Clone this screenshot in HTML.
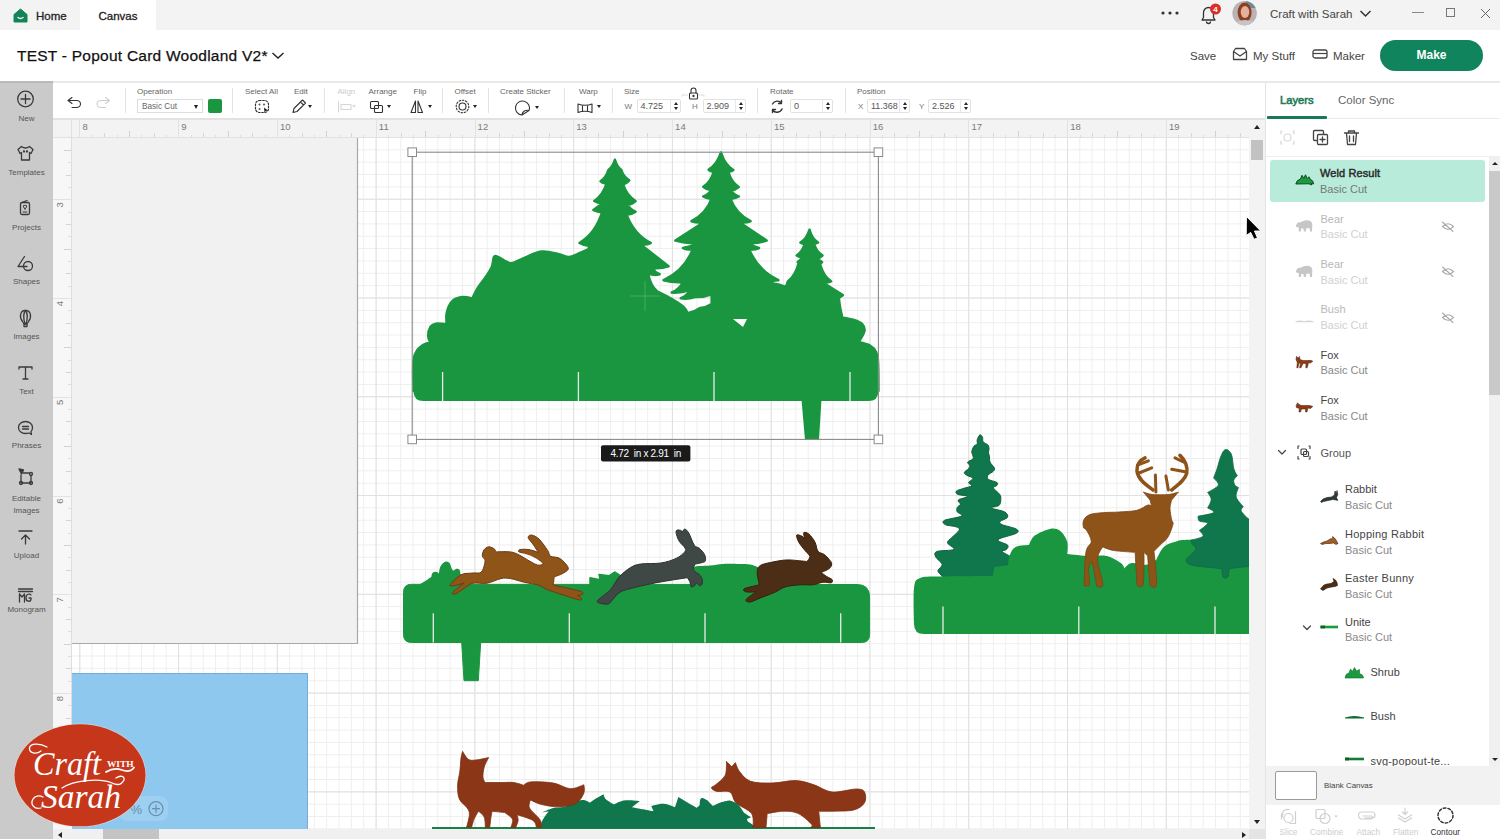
<!DOCTYPE html>
<html><head><meta charset="utf-8">
<style>
*{margin:0;padding:0;box-sizing:border-box}
html,body{width:1500px;height:839px;overflow:hidden;background:#fff;font-family:"Liberation Sans",sans-serif;color:#222}
.a{position:absolute}
.t{position:absolute;white-space:nowrap;line-height:1}
#top{left:0;top:0;width:1500px;height:30px;background:#f3f3f3}
#hdr{left:0;top:30px;width:1500px;height:51px;background:#fff}
#side{left:0;top:81px;width:53px;height:758px;background:#cacaca}
#tool{left:53px;top:81px;width:1212px;height:39px;background:#fff;border-top:2px solid #e9e9e9;border-bottom:2px solid #e2e2e2}
#rulT{left:53px;top:120px;width:1197px;height:18px;background:#f3f3f3}
#rulL{left:53px;top:137px;width:19px;height:692px;background:#f7f7f7}
#cv{left:72px;top:138px;width:1177px;height:691px;background:#fff;overflow:hidden}
#vs{left:1249px;top:120px;width:16px;height:719px;background:#f3f3f3}
#hs{left:53px;top:829px;width:1196px;height:10px;background:#f0f0f0}
#rp{left:1265px;top:81px;width:235px;height:758px;background:#fff;border-left:1px solid #e4e4e4}
.sl{position:absolute;left:0;width:53px;text-align:center;font-size:8px;color:#555;line-height:1}
.tl{position:absolute;font-size:8px;color:#666;line-height:1;white-space:nowrap}
.dv{position:absolute;top:88px;width:1px;height:25px;background:#e3e3e3}
.inp{position:absolute;top:99px;height:14px;border:1px solid #e2e2e2;border-radius:2px;background:#fff;font-size:9px;color:#555;line-height:12px;padding-left:3px}
.sp{position:absolute;top:0;right:0;width:10px;height:12px;border-left:1px solid #e8e8e8}
.sp:before{content:"";position:absolute;left:3px;top:2px;border:2px solid transparent;border-bottom:3px solid #222;border-top:0}
.sp:after{content:"";position:absolute;left:3px;top:7px;border:2px solid transparent;border-top:3px solid #222;border-bottom:0}
.ar{position:absolute;width:0;height:0;border-left:2px solid transparent;border-right:2px solid transparent;border-top:3px solid #222}
.lay{position:absolute;font-size:11px;color:#333;white-space:nowrap;line-height:1}
.lay2{position:absolute;font-size:11px;color:#888;white-space:nowrap;line-height:1}
</style></head>
<body>

<div id="top" class="a"></div>
<div class="a" style="left:80px;top:0;width:76px;height:30px;background:#fff"></div>
<svg class="a" style="left:13px;top:8px" width="15" height="15" viewBox="0 0 15 15"><path d="M1 6.5L7.5 1L14 6.5V14H1Z" fill="#13845a" stroke="#13845a" stroke-linejoin="round"/><path d="M5 9.5Q7.5 11.5 10 9.5" stroke="#fff" stroke-width="1.3" fill="none" stroke-linecap="round"/></svg>
<div class="a" style="left:36px;top:9.5px;font-size:11.5px;color:#222;-webkit-text-stroke:0.3px #222">Home</div>
<div class="a" style="left:98.5px;top:9.5px;font-size:11.5px;color:#222;-webkit-text-stroke:0.3px #222">Canvas</div>
<svg class="a" style="left:1160px;top:10px" width="20" height="6"><circle cx="3" cy="3" r="1.6" fill="#333"/><circle cx="10" cy="3" r="1.6" fill="#333"/><circle cx="17" cy="3" r="1.6" fill="#333"/></svg>
<svg class="a" style="left:1198px;top:3px" width="26" height="22" viewBox="0 0 26 22"><path d="M4 17H17L15.5 14.5V9.5A5 5 0 0 0 5.5 9.5V14.5Z" fill="none" stroke="#333" stroke-width="1.3" stroke-linejoin="round"/><path d="M8.5 18.5A2 2 0 0 0 12.5 18.5" fill="none" stroke="#333" stroke-width="1.3"/><circle cx="17.5" cy="6" r="5.5" fill="#d93025"/><text x="17.5" y="9" font-size="8" font-weight="bold" fill="#fff" text-anchor="middle" font-family="Liberation Sans">4</text></svg>
<svg class="a" style="left:1232px;top:0" width="26" height="27"><defs><clipPath id="avc"><circle cx="12.6" cy="13.2" r="12.2"/></clipPath></defs><g clip-path="url(#avc)"><rect width="26" height="27" fill="#b9b3b3"/><rect x="14" y="0" width="12" height="8" fill="#6d8d96"/><ellipse cx="12.6" cy="12.5" rx="7" ry="10" fill="#8e3e22"/><ellipse cx="13" cy="12" rx="4.3" ry="6" fill="#e3b09a"/><ellipse cx="12.8" cy="26" rx="11" ry="6" fill="#c8c4c6"/></g></svg>
<div class="a" style="left:1270px;top:8px;font-size:11.5px;color:#444">Craft with Sarah</div>
<svg class="a" style="left:1359px;top:9px" width="13" height="9"><path d="M1.5 2L6.5 7L11.5 2" fill="none" stroke="#333" stroke-width="1.5"/></svg>
<div class="a" style="left:1412px;top:12px;width:12px;height:1px;background:#888"></div>
<div class="a" style="left:1446px;top:8px;width:9px;height:9px;border:1px solid #777"></div>
<svg class="a" style="left:1480px;top:8px" width="11" height="11"><path d="M1 1L10 10M10 1L1 10" stroke="#666" stroke-width="1"/></svg>
<div id="hdr" class="a"></div>
<div class="t" style="left:17px;top:47.5px;font-size:15.5px;color:#111;letter-spacing:0.24px;-webkit-text-stroke:0.25px #111">TEST - Popout Card Woodland V2*</div>
<svg class="a" style="left:271px;top:51px" width="14" height="9"><path d="M1.5 2L7 7L12.5 2" fill="none" stroke="#222" stroke-width="1.4"/></svg>
<div class="a" style="left:1190px;top:50px;font-size:11.5px;color:#444">Save</div>
<svg class="a" style="left:1232px;top:47px" width="16" height="14" viewBox="0 0 16 14"><path d="M1.5 4.5L3.5 1.5H12.5L14.5 4.5V12.5H1.5Z M1.5 4.5L8 9L14.5 4.5" fill="none" stroke="#444" stroke-width="1.3" stroke-linejoin="round"/></svg>
<div class="a" style="left:1253px;top:50px;font-size:11.5px;color:#444">My Stuff</div>
<svg class="a" style="left:1312px;top:49px" width="16" height="11" viewBox="0 0 16 11"><rect x="1" y="1" width="14" height="8" rx="2" fill="none" stroke="#444" stroke-width="1.3"/><path d="M1 4.5H15" stroke="#444" stroke-width="1.2"/></svg>
<div class="a" style="left:1333px;top:50px;font-size:11.5px;color:#444">Maker</div>
<div class="a" style="left:1380px;top:40px;width:103px;height:31px;border-radius:16px;background:#10845c;color:#fff;font-weight:bold;font-size:12px;text-align:center;line-height:31px">Make</div>
<div id="side" class="a"></div><div class="a" style="left:0;top:81px;width:53px;height:2px;background:#bababa"></div>
<svg class="a" style="left:0;top:81px" width="53" height="560" viewBox="0 81 53 560" fill="none" stroke="#3a3a3a" stroke-width="1.3" stroke-linecap="round" stroke-linejoin="round">
<circle cx="25.5" cy="99" r="7.8"/><path d="M25.5 94.5V103.5M21 99H30"/>
<path d="M21.5 146.5L18 149.5L20 153.5L21.5 152.5V160H29.5V152.5L31 153.5L33 149.5L29.5 146.5Q25.5 149.5 21.5 146.5Z"/><circle cx="24" cy="151.5" r="0.5" fill="#3a3a3a"/><circle cx="27" cy="151.5" r="0.5" fill="#3a3a3a"/>
<rect x="20.5" y="202.5" width="9" height="12" rx="1.5"/><path d="M22 202.5L27 200.5"/><path d="M25 209Q22.5 206.5 23.5 205.5Q24.5 204.8 25 206Q25.5 204.8 26.5 205.5Q27.5 206.5 25 209Z" stroke-width="1"/><path d="M23 212H27" stroke-width="1"/>
<path d="M24.5 256.5L18 266.5H27"/><circle cx="28" cy="266" r="4.5"/>
<path d="M25.5 310.5C20 310.5 19 317 22.5 321.5L24 324H27L28.5 321.5C32 317 31 310.5 25.5 310.5Z"/><path d="M25.5 310.5C23.5 313 23.5 319 25 324M25.5 310.5C27.5 313 27.5 319 26 324"/><path d="M24 324.5V326.5H27V324.5"/>
<path d="M19 369V367H32V369M25.5 367V379M23 379H28"/>
<path d="M25.5 421.5C21.5 421.5 18.5 424 18.5 427.5C18.5 431 21.5 433.5 25.5 433.5C26.5 433.5 28 433.3 29 433L31.5 434.5L31 431.5C32 430.5 32.5 429 32.5 427.5C32.5 424 29.5 421.5 25.5 421.5Z"/><path d="M22.5 426.5H28.5M22.5 429H28.5"/>
<path d="M21 475V483H31V475M23 473H29" /><circle cx="21" cy="483" r="1.5"/><circle cx="31" cy="483" r="1.5"/><circle cx="31" cy="474" r="1.5"/><path d="M19 469L21.5 474L23.5 470Z" fill="#3a3a3a"/>
<path d="M19 531H32M25.5 544V535M21.5 539L25.5 535L29.5 539"/>
<path d="M18.5 589H32.5M18.5 591.5H32.5M19.5 594V602M19.5 594L22 597L24.5 594V602M31 595C30 593.5 26 593.5 26 598C26 602 30.5 602 31 599.5V598H29"/>
</svg>
<div class="sl" style="top:114.5px">New</div>
<div class="sl" style="top:168.5px">Templates</div>
<div class="sl" style="top:223.5px">Projects</div>
<div class="sl" style="top:278px">Shapes</div>
<div class="sl" style="top:333px">Images</div>
<div class="sl" style="top:387.5px">Text</div>
<div class="sl" style="top:442px">Phrases</div>
<div class="sl" style="top:495px">Editable</div>
<div class="sl" style="top:506.5px">Images</div>
<div class="sl" style="top:551.5px">Upload</div>
<div class="sl" style="top:606px">Monogram</div>
<div id="tool" class="a"></div>
<svg class="a" style="left:0;top:81px" width="1000" height="40" viewBox="0 81 1000 40" fill="none" stroke="#333" stroke-width="1.1" stroke-linecap="round" stroke-linejoin="round">
<path d="M72 97.5L68 100.5L72 103.5M68.5 100.5H76.5A4 3.5 0 0 1 76.5 107.5H72"/>
<path d="M105.5 97.5L109.5 100.5L105.5 103.5M109 100.5H101A4 3.5 0 0 0 101 107.5H105.5" stroke="#cfcfcf"/>
<g stroke="#333" stroke-width="1.2" stroke-dasharray="1.6 1.6"><rect x="255.5" y="100.5" width="13" height="12" rx="4"/></g>
<circle cx="259.5" cy="104.5" r="1" fill="#555" stroke="none"/><circle cx="264" cy="104.5" r="1" fill="#555" stroke="none"/><circle cx="259.5" cy="109" r="1" fill="#555" stroke="none"/>
<path d="M264 107.5L268 110.5L265.5 111L264.5 113Z" fill="#222" stroke="none"/>
<path d="M293 112.5L294 108.5L302.5 100L305.5 103L297 111.5Z M300.5 102L303.5 105"/>
<path d="M338.5 102V112M341 104.5H351V109.5H341Z" stroke="#d5d5d5"/>
<rect x="370.5" y="101.5" width="8" height="7" rx="1"/><rect x="374.5" y="105.5" width="8" height="7" rx="1"/>
<path d="M411 112.5L415.5 101V112.5Z M422.5 112.5L418 101V112.5Z"/>
<circle cx="462.5" cy="106.5" r="3.5"/><circle cx="462.5" cy="106.5" r="6.3" stroke-dasharray="1.5 1.7"/>
<path d="M529 110.5A7 7 0 1 0 522 115M529 110.5C525 109.5 522 112 522 115M529 110.5L522 115"/>
<path d="M578 104Q585 106.5 592 104V112.5Q585 110 578 112.5Z M582.5 105.5V111M587.5 105.5V111"/>
<path d="M682 96.5V95H687.5M699 95H704V96.5" stroke="#ddd" stroke-width="1"/>
<rect x="689.5" y="93" width="8" height="6" rx="1"/><path d="M691 93V90.5A2.5 2.5 0 0 1 696 90.5V93"/><circle cx="693.5" cy="96" r="0.6" fill="#333"/>
<path d="M781.5 103A5.5 5.5 0 0 0 772.5 104M772.5 110A5.5 5.5 0 0 0 782 109M781.5 100.5V103.5H778.5M772.5 112.5V109.5H775.5" stroke-width="1.4"/>
</svg>
<div class="dv" style="left:124.5px"></div><div class="dv" style="left:232px"></div><div class="dv" style="left:323.5px"></div><div class="dv" style="left:442px"></div>
<div class="dv" style="left:488px"></div><div class="dv" style="left:564px"></div><div class="dv" style="left:612px"></div><div class="dv" style="left:757px"></div><div class="dv" style="left:845px"></div>
<div class="tl" style="left:137px;top:87.5px">Operation</div>
<div class="a" style="left:136.5px;top:99px;width:66px;height:14px;border:1px solid #ddd;background:#fff"></div>
<div class="tl" style="left:142px;top:102.5px;font-size:8.2px;color:#666">Basic Cut</div>
<div class="ar" style="left:194px;top:104.5px;border-left-width:2.5px;border-right-width:2.5px;border-top-width:4px"></div>
<div class="a" style="left:207.5px;top:99px;width:14px;height:14px;border-radius:2px;background:#1a9640"></div>
<div class="tl" style="left:245px;top:87.5px">Select All</div>
<div class="tl" style="left:294px;top:87.5px">Edit</div>
<div class="ar" style="left:308px;top:105px"></div>
<div class="tl" style="left:337.5px;top:87.5px;color:#ccc">Align</div>
<div class="ar" style="left:352px;top:105px;border-top-color:#ddd"></div>
<div class="tl" style="left:368.5px;top:87.5px">Arrange</div>
<div class="ar" style="left:387px;top:105px"></div>
<div class="tl" style="left:413.5px;top:87.5px">Flip</div>
<div class="ar" style="left:428px;top:105px"></div>
<div class="tl" style="left:454.5px;top:87.5px">Offset</div>
<div class="ar" style="left:473px;top:105px"></div>
<div class="tl" style="left:500px;top:87.5px">Create Sticker</div>
<div class="ar" style="left:535px;top:106px"></div>
<div class="tl" style="left:579px;top:87.5px">Warp</div>
<div class="ar" style="left:597px;top:105px"></div>
<div class="tl" style="left:624px;top:87.5px">Size</div>
<div class="tl" style="left:624.5px;top:103px;color:#777">W</div>
<div class="inp" style="left:636.5px;width:44px">4.725<div class="sp"></div></div>
<div class="tl" style="left:692px;top:103px;color:#777">H</div>
<div class="inp" style="left:702.5px;width:43px">2.909<div class="sp"></div></div>
<div class="tl" style="left:770px;top:87.5px">Rotate</div>
<div class="inp" style="left:790px;width:43px">0<div class="sp"></div></div>
<div class="tl" style="left:857px;top:87.5px">Position</div>
<div class="tl" style="left:858px;top:103px;color:#777">X</div>
<div class="inp" style="left:867px;width:43px">11.368<div class="sp"></div></div>
<div class="tl" style="left:919px;top:103px;color:#777">Y</div>
<div class="inp" style="left:928px;width:43px">2.526<div class="sp"></div></div>
<div id="rulT" class="a"></div>
<div id="rulL" class="a"></div>

<svg class="a" style="left:53px;top:120px" width="1197" height="18">
<rect x="26" y="0" width="1" height="18" fill="#e2e2e2"/>
<rect x="39" y="15" width="1" height="3" fill="#dedede"/>
<rect x="51" y="13" width="1" height="5" fill="#d6d6d6"/>
<rect x="64" y="15" width="1" height="3" fill="#dedede"/>
<rect x="76" y="11" width="1" height="7" fill="#d0d0d0"/>
<rect x="88" y="15" width="1" height="3" fill="#dedede"/>
<rect x="101" y="13" width="1" height="5" fill="#d6d6d6"/>
<rect x="113" y="15" width="1" height="3" fill="#dedede"/>
<rect x="125" y="0" width="1" height="18" fill="#e2e2e2"/>
<rect x="138" y="15" width="1" height="3" fill="#dedede"/>
<rect x="150" y="13" width="1" height="5" fill="#d6d6d6"/>
<rect x="162" y="15" width="1" height="3" fill="#dedede"/>
<rect x="175" y="11" width="1" height="7" fill="#d0d0d0"/>
<rect x="187" y="15" width="1" height="3" fill="#dedede"/>
<rect x="199" y="13" width="1" height="5" fill="#d6d6d6"/>
<rect x="212" y="15" width="1" height="3" fill="#dedede"/>
<rect x="224" y="0" width="1" height="18" fill="#e2e2e2"/>
<rect x="236" y="15" width="1" height="3" fill="#dedede"/>
<rect x="249" y="13" width="1" height="5" fill="#d6d6d6"/>
<rect x="261" y="15" width="1" height="3" fill="#dedede"/>
<rect x="273" y="11" width="1" height="7" fill="#d0d0d0"/>
<rect x="286" y="15" width="1" height="3" fill="#dedede"/>
<rect x="298" y="13" width="1" height="5" fill="#d6d6d6"/>
<rect x="310" y="15" width="1" height="3" fill="#dedede"/>
<rect x="323" y="0" width="1" height="18" fill="#e2e2e2"/>
<rect x="335" y="15" width="1" height="3" fill="#dedede"/>
<rect x="348" y="13" width="1" height="5" fill="#d6d6d6"/>
<rect x="360" y="15" width="1" height="3" fill="#dedede"/>
<rect x="372" y="11" width="1" height="7" fill="#d0d0d0"/>
<rect x="385" y="15" width="1" height="3" fill="#dedede"/>
<rect x="397" y="13" width="1" height="5" fill="#d6d6d6"/>
<rect x="409" y="15" width="1" height="3" fill="#dedede"/>
<rect x="422" y="0" width="1" height="18" fill="#e2e2e2"/>
<rect x="434" y="15" width="1" height="3" fill="#dedede"/>
<rect x="446" y="13" width="1" height="5" fill="#d6d6d6"/>
<rect x="459" y="15" width="1" height="3" fill="#dedede"/>
<rect x="471" y="11" width="1" height="7" fill="#d0d0d0"/>
<rect x="483" y="15" width="1" height="3" fill="#dedede"/>
<rect x="496" y="13" width="1" height="5" fill="#d6d6d6"/>
<rect x="508" y="15" width="1" height="3" fill="#dedede"/>
<rect x="520" y="0" width="1" height="18" fill="#e2e2e2"/>
<rect x="533" y="15" width="1" height="3" fill="#dedede"/>
<rect x="545" y="13" width="1" height="5" fill="#d6d6d6"/>
<rect x="557" y="15" width="1" height="3" fill="#dedede"/>
<rect x="570" y="11" width="1" height="7" fill="#d0d0d0"/>
<rect x="582" y="15" width="1" height="3" fill="#dedede"/>
<rect x="594" y="13" width="1" height="5" fill="#d6d6d6"/>
<rect x="607" y="15" width="1" height="3" fill="#dedede"/>
<rect x="619" y="0" width="1" height="18" fill="#e2e2e2"/>
<rect x="631" y="15" width="1" height="3" fill="#dedede"/>
<rect x="644" y="13" width="1" height="5" fill="#d6d6d6"/>
<rect x="656" y="15" width="1" height="3" fill="#dedede"/>
<rect x="669" y="11" width="1" height="7" fill="#d0d0d0"/>
<rect x="681" y="15" width="1" height="3" fill="#dedede"/>
<rect x="693" y="13" width="1" height="5" fill="#d6d6d6"/>
<rect x="706" y="15" width="1" height="3" fill="#dedede"/>
<rect x="718" y="0" width="1" height="18" fill="#e2e2e2"/>
<rect x="730" y="15" width="1" height="3" fill="#dedede"/>
<rect x="743" y="13" width="1" height="5" fill="#d6d6d6"/>
<rect x="755" y="15" width="1" height="3" fill="#dedede"/>
<rect x="767" y="11" width="1" height="7" fill="#d0d0d0"/>
<rect x="780" y="15" width="1" height="3" fill="#dedede"/>
<rect x="792" y="13" width="1" height="5" fill="#d6d6d6"/>
<rect x="804" y="15" width="1" height="3" fill="#dedede"/>
<rect x="817" y="0" width="1" height="18" fill="#e2e2e2"/>
<rect x="829" y="15" width="1" height="3" fill="#dedede"/>
<rect x="841" y="13" width="1" height="5" fill="#d6d6d6"/>
<rect x="854" y="15" width="1" height="3" fill="#dedede"/>
<rect x="866" y="11" width="1" height="7" fill="#d0d0d0"/>
<rect x="878" y="15" width="1" height="3" fill="#dedede"/>
<rect x="891" y="13" width="1" height="5" fill="#d6d6d6"/>
<rect x="903" y="15" width="1" height="3" fill="#dedede"/>
<rect x="915" y="0" width="1" height="18" fill="#e2e2e2"/>
<rect x="928" y="15" width="1" height="3" fill="#dedede"/>
<rect x="940" y="13" width="1" height="5" fill="#d6d6d6"/>
<rect x="952" y="15" width="1" height="3" fill="#dedede"/>
<rect x="965" y="11" width="1" height="7" fill="#d0d0d0"/>
<rect x="977" y="15" width="1" height="3" fill="#dedede"/>
<rect x="990" y="13" width="1" height="5" fill="#d6d6d6"/>
<rect x="1002" y="15" width="1" height="3" fill="#dedede"/>
<rect x="1014" y="0" width="1" height="18" fill="#e2e2e2"/>
<rect x="1027" y="15" width="1" height="3" fill="#dedede"/>
<rect x="1039" y="13" width="1" height="5" fill="#d6d6d6"/>
<rect x="1051" y="15" width="1" height="3" fill="#dedede"/>
<rect x="1064" y="11" width="1" height="7" fill="#d0d0d0"/>
<rect x="1076" y="15" width="1" height="3" fill="#dedede"/>
<rect x="1088" y="13" width="1" height="5" fill="#d6d6d6"/>
<rect x="1101" y="15" width="1" height="3" fill="#dedede"/>
<rect x="1113" y="0" width="1" height="18" fill="#e2e2e2"/>
<rect x="1125" y="15" width="1" height="3" fill="#dedede"/>
<rect x="1138" y="13" width="1" height="5" fill="#d6d6d6"/>
<rect x="1150" y="15" width="1" height="3" fill="#dedede"/>
<rect x="1162" y="11" width="1" height="7" fill="#d0d0d0"/>
<rect x="1175" y="15" width="1" height="3" fill="#dedede"/>
<rect x="1187" y="13" width="1" height="5" fill="#d6d6d6"/>
<text x="29.5" y="10.2" font-size="9.5" fill="#7a7a7a" font-family="Liberation Sans">8</text>
<text x="128.3" y="10.2" font-size="9.5" fill="#7a7a7a" font-family="Liberation Sans">9</text>
<text x="227.0" y="10.2" font-size="9.5" fill="#7a7a7a" font-family="Liberation Sans">10</text>
<text x="325.8" y="10.2" font-size="9.5" fill="#7a7a7a" font-family="Liberation Sans">11</text>
<text x="424.6" y="10.2" font-size="9.5" fill="#7a7a7a" font-family="Liberation Sans">12</text>
<text x="523.3" y="10.2" font-size="9.5" fill="#7a7a7a" font-family="Liberation Sans">13</text>
<text x="622.1" y="10.2" font-size="9.5" fill="#7a7a7a" font-family="Liberation Sans">14</text>
<text x="720.9" y="10.2" font-size="9.5" fill="#7a7a7a" font-family="Liberation Sans">15</text>
<text x="819.7" y="10.2" font-size="9.5" fill="#7a7a7a" font-family="Liberation Sans">16</text>
<text x="918.4" y="10.2" font-size="9.5" fill="#7a7a7a" font-family="Liberation Sans">17</text>
<text x="1017.2" y="10.2" font-size="9.5" fill="#7a7a7a" font-family="Liberation Sans">18</text>
<text x="1116.0" y="10.2" font-size="9.5" fill="#7a7a7a" font-family="Liberation Sans">19</text>
<rect x="0" y="17" width="1197" height="1" fill="#e2e2e2"/><rect x="18" y="0" width="1" height="18" fill="#e0e0e0"/>
</svg>
<svg class="a" style="left:53px;top:137px" width="19" height="692">
<rect x="15" y="0" width="3" height="1" fill="#dedede"/>
<rect x="11" y="13" width="7" height="1" fill="#d0d0d0"/>
<rect x="15" y="25" width="3" height="1" fill="#dedede"/>
<rect x="13" y="38" width="5" height="1" fill="#d6d6d6"/>
<rect x="15" y="50" width="3" height="1" fill="#dedede"/>
<rect x="0" y="62" width="18" height="1" fill="#e2e2e2"/>
<rect x="15" y="75" width="3" height="1" fill="#dedede"/>
<rect x="13" y="87" width="5" height="1" fill="#d6d6d6"/>
<rect x="15" y="99" width="3" height="1" fill="#dedede"/>
<rect x="11" y="112" width="7" height="1" fill="#d0d0d0"/>
<rect x="15" y="124" width="3" height="1" fill="#dedede"/>
<rect x="13" y="136" width="5" height="1" fill="#d6d6d6"/>
<rect x="15" y="149" width="3" height="1" fill="#dedede"/>
<rect x="0" y="161" width="18" height="1" fill="#e2e2e2"/>
<rect x="15" y="173" width="3" height="1" fill="#dedede"/>
<rect x="13" y="186" width="5" height="1" fill="#d6d6d6"/>
<rect x="15" y="198" width="3" height="1" fill="#dedede"/>
<rect x="11" y="210" width="7" height="1" fill="#d0d0d0"/>
<rect x="15" y="223" width="3" height="1" fill="#dedede"/>
<rect x="13" y="235" width="5" height="1" fill="#d6d6d6"/>
<rect x="15" y="247" width="3" height="1" fill="#dedede"/>
<rect x="0" y="260" width="18" height="1" fill="#e2e2e2"/>
<rect x="15" y="272" width="3" height="1" fill="#dedede"/>
<rect x="13" y="284" width="5" height="1" fill="#d6d6d6"/>
<rect x="15" y="297" width="3" height="1" fill="#dedede"/>
<rect x="11" y="309" width="7" height="1" fill="#d0d0d0"/>
<rect x="15" y="321" width="3" height="1" fill="#dedede"/>
<rect x="13" y="334" width="5" height="1" fill="#d6d6d6"/>
<rect x="15" y="346" width="3" height="1" fill="#dedede"/>
<rect x="0" y="359" width="18" height="1" fill="#e2e2e2"/>
<rect x="15" y="371" width="3" height="1" fill="#dedede"/>
<rect x="13" y="383" width="5" height="1" fill="#d6d6d6"/>
<rect x="15" y="396" width="3" height="1" fill="#dedede"/>
<rect x="11" y="408" width="7" height="1" fill="#d0d0d0"/>
<rect x="15" y="420" width="3" height="1" fill="#dedede"/>
<rect x="13" y="433" width="5" height="1" fill="#d6d6d6"/>
<rect x="15" y="445" width="3" height="1" fill="#dedede"/>
<rect x="0" y="457" width="18" height="1" fill="#e2e2e2"/>
<rect x="15" y="470" width="3" height="1" fill="#dedede"/>
<rect x="13" y="482" width="5" height="1" fill="#d6d6d6"/>
<rect x="15" y="494" width="3" height="1" fill="#dedede"/>
<rect x="11" y="507" width="7" height="1" fill="#d0d0d0"/>
<rect x="15" y="519" width="3" height="1" fill="#dedede"/>
<rect x="13" y="531" width="5" height="1" fill="#d6d6d6"/>
<rect x="15" y="544" width="3" height="1" fill="#dedede"/>
<rect x="0" y="556" width="18" height="1" fill="#e2e2e2"/>
<rect x="15" y="568" width="3" height="1" fill="#dedede"/>
<rect x="13" y="581" width="5" height="1" fill="#d6d6d6"/>
<rect x="15" y="593" width="3" height="1" fill="#dedede"/>
<rect x="11" y="605" width="7" height="1" fill="#d0d0d0"/>
<rect x="15" y="618" width="3" height="1" fill="#dedede"/>
<rect x="13" y="630" width="5" height="1" fill="#d6d6d6"/>
<rect x="15" y="642" width="3" height="1" fill="#dedede"/>
<rect x="0" y="655" width="18" height="1" fill="#e2e2e2"/>
<rect x="15" y="667" width="3" height="1" fill="#dedede"/>
<rect x="13" y="680" width="5" height="1" fill="#d6d6d6"/>
<text transform="translate(10,70.4) rotate(-90)" x="0" y="0" font-size="9.5" fill="#7a7a7a" font-family="Liberation Sans">3</text>
<text transform="translate(10,169.2) rotate(-90)" x="0" y="0" font-size="9.5" fill="#7a7a7a" font-family="Liberation Sans">4</text>
<text transform="translate(10,267.9) rotate(-90)" x="0" y="0" font-size="9.5" fill="#7a7a7a" font-family="Liberation Sans">5</text>
<text transform="translate(10,366.7) rotate(-90)" x="0" y="0" font-size="9.5" fill="#7a7a7a" font-family="Liberation Sans">6</text>
<text transform="translate(10,465.5) rotate(-90)" x="0" y="0" font-size="9.5" fill="#7a7a7a" font-family="Liberation Sans">7</text>
<text transform="translate(10,564.2) rotate(-90)" x="0" y="0" font-size="9.5" fill="#7a7a7a" font-family="Liberation Sans">8</text>
<rect x="18" y="0" width="1" height="688" fill="#dedede"/>
</svg>
<div id="cv" class="a"></div>
<svg class="a" style="left:0;top:0" width="1500" height="839"><defs><clipPath id="cvc"><rect x="72" y="138" width="1177" height="691"/></clipPath>
<pattern id="gm" x="5.2" y="1.2" width="12.346" height="12.346" patternUnits="userSpaceOnUse"><path d="M0 0.5H12.346M0.5 0V12.346" stroke="#eeeeee" stroke-width="1" fill="none"/></pattern>
<pattern id="gM" x="79.3" y="1.2" width="98.77" height="98.77" patternUnits="userSpaceOnUse"><path d="M0 0.5H98.77M0.5 0V98.77" stroke="#e0e0e0" stroke-width="1" fill="none"/></pattern>
</defs><g clip-path="url(#cvc)">
<rect x="71" y="138" width="1178" height="691" fill="#fff"/>
<rect x="71" y="138" width="1178" height="691" fill="url(#gm)"/>
<rect x="71" y="138" width="1178" height="691" fill="url(#gM)"/>
<rect x="72" y="138" width="286" height="506" fill="#f1f1f1"/>
<path d="M357.5 138V643.5H71" stroke="#a8a8a8" stroke-width="1.2" fill="none"/>
<rect x="71" y="673" width="237" height="160" fill="#8ec8ee"/>
<path d="M71 673.5H307.5V830" stroke="#73aed8" stroke-width="1" fill="none"/>
<path d="M413.5 391.0 C413.5 391.0 412.9 367.6 413.5 360.8 C414.1 354.0 415.5 352.8 417.4 350.0 C419.3 347.2 422.9 345.3 425.1 344.1 C427.3 342.9 430.6 343.0 430.6 343.0 C430.6 343.0 428.2 338.7 428.2 336.0 C428.2 333.3 429.3 328.9 430.6 326.8 C431.9 324.8 433.3 324.1 436.0 323.7 C438.7 323.3 446.8 324.4 446.8 324.4 C446.8 324.4 446.0 316.5 446.8 312.8 C447.6 309.1 449.2 304.6 451.5 302.0 C453.8 299.4 457.3 297.9 460.8 297.3 C464.3 296.7 472.4 298.6 472.4 298.6 C472.4 298.6 475.6 291.6 477.8 288.0 C480.0 284.4 483.3 280.7 485.6 277.2 C487.9 273.7 490.4 270.5 491.8 267.1 C493.2 263.7 493.0 258.7 494.0 257.0 C495.0 255.3 495.3 256.0 498.0 257.0 C500.7 258.0 506.2 262.9 510.3 263.2 C514.4 263.5 517.5 260.5 522.7 258.6 C527.9 256.7 535.3 252.4 541.3 251.6 C547.2 250.8 553.8 253.1 558.4 254.0 C563.0 254.9 565.6 257.2 569.2 257.0 C572.8 256.8 576.9 254.2 580.0 253.0 C583.1 251.8 588.0 249.5 588.0 249.5 C588.0 249.5 590.0 245.5 590.0 245.5 Q584.8 246.1 579.5 243.0 Q595.5 233.6 602.4 211.7 Q597.9 212.7 593.4 210.0 C593.4 210.0 603.3 202.8 603.3 202.8 Q598.8 203.7 594.3 201.0 Q603.0 195.6 606.8 183.0 Q603.7 184.0 600.6 181.3 Q606.2 177.8 608.6 169.7 Q613.0 166.7 614.9 159.8 Q616.8 166.7 621.1 169.7 Q623.5 177.2 629.2 180.4 Q626.0 184.0 622.9 184.0 Q626.7 195.9 635.5 201.0 Q631.5 204.6 627.4 204.6 Q629.8 209.6 635.5 211.7 Q631.0 214.9 626.5 214.4 Q633.8 234.4 650.7 243.0 Q645.4 245.3 640.0 244.0 C640.0 244.0 668.5 266.3 668.5 266.3 Q660.5 268.9 652.5 268.0 Q654.6 272.4 659.6 274.3 Q653.8 275.7 648.0 273.4 Q650.7 285.9 657.0 291.3 C657.0 291.3 665.6 295.4 670.0 298.0 C674.4 300.6 680.4 304.1 683.3 306.7 C686.2 309.2 687.5 313.3 687.5 313.3 Q693.8 312.4 700.0 308.0 Q705.9 307.9 711.7 304.2 Q711.7 301.2 711.7 294.2 Q703.4 297.4 695.0 297.0 Q687.9 299.4 680.8 298.3 Q687.2 295.8 690.0 290.0 Q680.9 293.1 671.7 292.5 Q679.6 289.4 683.0 282.0 Q673.3 282.9 663.6 280.2 Q684.2 270.8 693.0 249.0 Q688.0 250.3 683.0 248.0 Q690.0 247.3 697.0 243.0 Q686.2 243.6 675.4 240.5 C675.4 240.5 704.0 222.0 704.0 222.0 Q697.8 223.4 691.5 221.2 Q705.9 214.2 712.0 198.0 Q707.6 199.1 703.3 196.5 Q708.7 194.6 711.0 190.0 Q707.1 190.2 703.3 186.8 Q710.8 182.1 714.0 171.0 Q711.4 172.2 708.7 169.7 Q717.3 164.5 721.0 152.5 Q724.7 164.8 733.3 170.0 Q730.6 172.3 728.0 171.0 Q731.2 182.2 738.7 187.0 Q734.9 190.3 731.0 190.0 Q733.3 194.6 738.7 196.5 Q734.4 199.1 730.0 198.0 Q736.1 214.2 750.5 221.2 Q744.8 223.4 739.0 222.0 C739.0 222.0 766.6 240.5 766.6 240.5 Q757.8 243.6 749.0 243.0 Q754.0 247.3 759.0 248.0 Q754.0 250.3 749.0 249.0 Q757.8 270.8 778.4 280.2 Q770.3 281.4 762.3 279.0 C762.3 279.0 765.8 281.3 768.8 282.3 C771.8 283.3 777.1 284.2 780.0 285.0 C782.9 285.8 786.0 287.0 786.0 287.0 C786.0 287.0 788.0 281.3 788.0 281.3 Q795.7 275.5 799.0 262.0 C799.0 262.0 797.7 262.0 797.7 262.0 C797.7 262.0 804.0 257.0 804.0 257.0 Q800.4 258.1 796.7 255.5 Q802.5 251.8 805.0 243.0 Q802.8 244.6 800.5 242.6 Q806.8 238.8 809.5 229.8 Q812.0 238.8 818.0 242.6 C818.0 242.6 814.0 244.0 814.0 244.0 Q816.5 252.1 822.4 255.5 Q819.2 258.6 816.0 258.0 C816.0 258.0 822.0 262.0 822.0 262.0 C822.0 262.0 820.0 264.0 820.0 264.0 Q823.3 276.1 831.0 281.3 Q826.5 283.4 822.0 282.0 C822.0 282.0 842.8 295.2 842.8 295.2 C842.8 295.2 838.8 297.9 838.8 297.9 C838.8 297.9 839.4 303.7 840.0 307.0 C840.6 310.3 842.3 317.7 842.3 317.7 C842.3 317.7 850.7 318.9 854.0 320.0 C857.3 321.1 860.3 322.2 862.0 324.0 C863.7 325.8 865.0 328.0 864.4 331.0 C863.8 334.0 858.6 342.0 858.6 342.0 C858.6 342.0 867.1 343.9 870.0 345.6 C872.9 347.3 874.7 349.3 876.0 352.0 C877.3 354.7 877.6 355.5 878.0 362.0 C878.4 368.5 878.4 391.0 878.4 391.0 C878.4 391.0 413.5 391.0 413.5 391.0Z" fill="#1a9640" stroke="#1a9640" stroke-width="2.6" stroke-linejoin="round"/><path d="M413.5 360 L878.4 360 L878.4 391 Q878.4 401 868.4 401 L821.4 401 L819 439.8 L805 439.8 L801.6 401 L423.5 401 Q413.5 401 413.5 391Z" fill="#1a9640"/>
<path d="M733 319L747 319L743 327Z" fill="#fff"/>
<path d="M442.6 372V401M578.4 372V401M714 372V401M850 372V401" stroke="#e4efe7" stroke-width="1.3"/>
<path d="M403.5 592.5 Q403.5 584.3 411.5 584.3 L857 584.5 Q869.6 584.5 869.6 597 L869.6 634.5 Q869.6 642.5 861.6 642.5 L480.7 642.5 L478.3 680.7 L464 680.7 L461.7 642.5 L411.5 642.5 Q403.5 642.5 403.5 634.5Z" fill="#1a9640" stroke="#1a9640" stroke-width="1"/>
<path d="M420.0 585.0 C420.0 585.0 422.7 583.5 424.0 582.7 C425.3 581.9 426.7 580.9 428.0 580.0 C429.3 579.1 432.0 577.3 432.0 577.3 C432.0 577.3 432.3 574.3 433.0 573.5 C433.7 572.7 434.9 572.2 436.0 572.5 C437.1 572.8 439.5 575.0 439.5 575.0 C439.5 575.0 440.0 569.1 441.0 567.0 C442.0 564.9 444.0 563.1 445.3 562.5 C446.6 561.9 448.0 562.2 449.0 563.5 C450.0 564.8 450.7 568.7 451.5 570.0 C452.3 571.3 454.0 571.5 454.0 571.5 C454.0 571.5 455.7 569.7 456.5 569.5 C457.3 569.3 458.4 569.6 459.0 570.5 C459.6 571.4 459.2 572.6 460.0 575.0 C460.8 577.4 464.0 585.0 464.0 585.0 C464.0 585.0 420.0 585.0 420.0 585.0Z" fill="#1a9640" stroke="#1a9640" stroke-width="1.5" stroke-linejoin="round"/>
<path d="M590.0 577.7 L600.1 579.7 L599.1 574.6 L609.3 575.7 L615.0 572.0 L623.4 577.7 L628.0 585.0 L590.0 585.0Z" fill="#1a9640" stroke="#1a9640" stroke-width="1.5" stroke-linejoin="round"/>
<path d="M690.0 570.0 C690.0 570.0 692.1 567.2 695.4 566.5 C698.7 565.8 705.4 565.9 710.0 565.5 C714.6 565.1 718.0 564.1 723.0 563.9 C728.0 563.6 735.5 563.9 740.0 564.0 C744.5 564.1 747.1 563.9 750.1 564.5 C753.1 565.1 756.2 565.9 758.2 567.6 C760.2 569.4 760.9 572.1 762.0 575.0 C763.1 577.9 765.0 585.0 765.0 585.0 C765.0 585.0 690.0 585.0 690.0 585.0 C690.0 585.0 690.0 570.0 690.0 570.0Z" fill="#1a9640"/>
<path d="M484.2 549.6 C485.3 548.0 487.2 546.9 488.9 546.8 C490.6 546.7 493.4 548.2 494.5 549.1 C495.6 550.0 495.4 551.9 495.4 551.9 C495.4 551.9 506.3 551.3 510.4 551.9 C514.5 552.5 516.6 553.7 519.7 555.2 C522.8 556.7 526.0 559.2 529.0 560.8 C532.0 562.4 535.1 564.4 537.4 565.0 C539.7 565.6 543.0 564.5 543.0 564.5 C543.0 564.5 543.5 563.2 541.2 561.7 C538.9 560.2 532.7 556.8 529.0 555.2 C525.3 553.6 518.8 551.9 518.8 551.9 C518.8 551.9 518.0 550.0 519.7 549.6 C521.4 549.2 525.9 549.1 529.0 549.6 C532.1 550.1 538.4 552.4 538.4 552.4 C538.4 552.4 534.5 546.5 532.8 544.0 C531.1 541.5 528.3 539.0 528.1 537.5 C527.9 536.0 529.9 534.8 531.8 535.1 C533.7 535.4 536.6 536.7 539.3 539.3 C541.9 541.9 545.8 547.7 547.7 550.5 C549.6 553.3 548.6 554.9 550.5 556.1 C552.4 557.4 556.4 556.8 558.9 558.0 C561.4 559.2 564.0 561.7 565.5 563.6 C567.0 565.5 568.8 567.5 568.2 569.2 C567.6 570.9 564.0 572.8 561.7 574.0 C559.4 575.2 554.2 576.7 554.2 576.7 C554.2 576.7 553.3 585.1 553.3 585.1 C553.3 585.1 561.7 586.8 566.4 587.9 C571.1 589.0 578.6 590.5 581.3 591.6 C583.9 592.7 582.9 593.8 582.3 594.4 C581.7 595.0 577.6 595.4 577.6 595.4 C577.6 595.4 581.0 597.4 581.3 598.2 C581.6 599.0 582.3 600.5 579.5 600.0 C576.7 599.5 569.8 597.1 564.5 595.4 C559.2 593.7 552.1 591.5 547.7 589.8 C543.4 588.1 542.3 586.4 538.4 585.1 C534.5 583.9 529.1 583.4 524.4 582.3 C519.7 581.2 514.3 579.2 510.4 578.6 C506.5 578.0 504.9 577.8 501.0 578.6 C497.1 579.4 491.7 582.4 487.0 583.2 C482.3 584.0 476.7 582.4 473.0 583.2 C469.3 584.0 467.4 586.2 464.6 587.9 C461.8 589.6 458.2 592.7 456.2 593.5 C454.2 594.3 451.2 594.3 452.5 592.6 C453.8 590.9 463.7 583.2 463.7 583.2 C463.7 583.2 454.7 585.8 452.5 586.0 C450.3 586.2 449.2 586.1 450.6 584.2 C452.0 582.3 457.2 576.7 460.9 574.8 C464.6 572.9 469.6 573.5 473.0 573.0 C476.4 572.5 479.4 574.0 481.4 572.0 C483.4 570.0 485.0 563.4 485.1 560.8 C485.2 558.1 482.5 558.0 482.3 556.1 C482.1 554.2 483.1 551.2 484.2 549.6Z" fill="#8f5418" stroke="#6e3a10" stroke-width="1"/>
<path d="M521 553.2 C526 554.5 532 558 537 562.5 C539 563.8 541.5 564 541.8 563.3 C541 561.5 536 558 529.5 555.3 C526 554 523 553.3 521 553.2Z" fill="#fff"/>
<path d="M677.1 530.1 C678.0 529.7 680.4 530.2 681.2 530.6 C682.1 531.0 682.2 532.6 682.2 532.6 C682.2 532.6 683.6 529.0 684.7 529.1 C685.8 529.2 687.2 530.4 688.8 533.1 C690.4 535.8 692.6 542.8 694.4 545.3 C696.2 547.8 697.7 546.8 699.4 548.3 C701.1 549.8 703.5 552.4 704.5 554.4 C705.5 556.4 705.8 559.1 705.5 560.5 C705.2 561.9 704.2 561.9 702.5 562.5 C700.8 563.1 695.4 564.0 695.4 564.0 C695.4 564.0 692.5 567.6 693.3 569.6 C694.1 571.6 698.9 573.7 700.4 575.7 C701.9 577.7 702.5 580.0 702.5 581.7 C702.5 583.4 701.4 585.6 700.4 585.8 C699.4 586.0 696.4 582.8 696.4 582.8 C696.4 582.8 695.2 585.1 694.4 585.8 C693.5 586.5 692.1 587.5 691.3 586.8 C690.5 586.1 690.5 583.2 689.8 581.7 C689.1 580.2 687.3 577.7 687.3 577.7 C687.3 577.7 677.2 579.2 671.1 580.2 C665.0 581.2 657.0 582.5 650.8 583.8 C644.5 585.1 638.7 586.4 633.6 587.8 C628.5 589.1 624.0 589.9 620.4 591.9 C616.8 593.9 614.3 598.0 612.3 600.0 C610.3 602.0 610.4 603.5 608.2 604.0 C606.0 604.5 600.8 603.7 599.1 603.0 C597.4 602.3 596.2 602.2 598.1 600.0 C600.0 597.8 606.8 593.7 610.3 589.8 C613.8 585.9 616.0 580.4 619.4 576.7 C622.8 573.0 627.0 569.7 630.5 567.6 C634.0 565.5 635.6 564.8 640.7 564.0 C645.8 563.2 655.0 563.9 660.9 563.0 C666.8 562.1 672.2 560.2 676.1 558.4 C680.0 556.6 682.7 554.1 684.2 552.4 C685.7 550.7 686.0 550.2 685.2 548.3 C684.4 546.4 680.7 543.7 679.2 541.2 C677.7 538.7 676.5 535.0 676.1 533.1 C675.8 531.2 676.2 530.5 677.1 530.1Z" fill="#404846" stroke="#2c3331" stroke-width="1"/>
<path d="M796.7 535.1 C797.2 534.1 800.4 535.5 801.8 536.1 C803.1 536.7 804.8 538.7 804.8 538.7 C804.8 538.7 803.1 533.4 803.8 532.6 C804.5 531.8 807.0 532.5 808.9 534.1 C810.8 535.7 813.5 539.3 815.0 542.2 C816.5 545.1 816.5 549.3 818.0 551.3 C819.5 553.3 822.2 553.0 824.1 554.4 C826.0 555.8 827.9 557.8 829.2 559.4 C830.5 561.0 831.7 562.5 831.7 564.0 C831.7 565.5 831.0 567.2 829.2 568.6 C827.4 570.0 821.1 572.6 821.1 572.6 C821.1 572.6 825.2 575.5 827.1 576.7 C829.0 577.9 831.5 578.7 832.2 579.7 C832.9 580.7 832.7 582.4 831.2 582.8 C829.7 583.2 826.1 581.9 823.1 582.2 C820.1 582.5 816.7 584.4 813.0 584.8 C809.3 585.2 805.4 584.5 800.8 584.8 C796.2 585.1 789.8 585.6 785.6 586.8 C781.4 588.0 779.7 590.0 775.5 591.9 C771.3 593.8 764.5 596.3 760.3 598.0 C756.1 599.7 752.5 601.8 750.1 602.0 C747.7 602.2 745.1 601.2 746.1 599.5 C747.1 597.8 756.2 591.9 756.2 591.9 C756.2 591.9 748.1 592.4 746.1 591.9 C744.1 591.4 742.6 589.8 744.1 588.8 C745.6 587.8 752.7 586.5 755.2 585.8 C757.7 585.1 759.3 584.8 759.3 584.8 C759.3 584.8 757.0 574.8 757.2 571.6 C757.4 568.4 758.1 567.0 760.3 565.5 C762.5 564.0 766.2 563.4 770.4 562.5 C774.6 561.6 781.2 560.3 785.6 560.0 C790.0 559.7 793.2 560.2 796.7 560.5 C800.2 560.8 806.9 561.5 806.9 561.5 C806.9 561.5 810.2 558.3 809.9 556.4 C809.5 554.5 806.6 552.7 804.8 550.3 C802.9 547.9 800.1 544.7 798.8 542.2 C797.4 539.7 796.2 536.1 796.7 535.1Z" fill="#4b2e15" stroke="#3a1f0b" stroke-width="1"/>
<path d="M433.3 613.3V642.5M569.3 613.3V642.5M705 613.3V642.5M840.7 613.3V642.5" stroke="#e4efe7" stroke-width="1.3"/>
<path d="M979.9 434.8 C980.8 434.4 982.1 436.3 982.6 437.5 C983.1 438.7 982.2 440.6 983.1 441.8 C984.0 443.1 986.9 443.8 987.9 445.0 C988.9 446.2 988.9 447.6 989.0 448.8 C989.1 450.1 988.4 451.2 988.5 452.5 C988.6 453.8 989.2 455.2 989.5 456.8 C989.8 458.4 989.3 460.3 990.1 462.2 C990.9 464.1 993.9 466.6 994.4 468.1 C994.9 469.6 994.4 470.1 993.3 471.3 C992.2 472.5 988.7 473.8 987.9 475.1 C987.1 476.5 987.0 478.1 988.5 479.4 C990.0 480.6 995.8 481.5 997.1 482.6 C998.4 483.7 997.1 484.9 996.5 485.8 C995.9 486.7 992.8 486.5 993.3 487.9 C993.8 489.3 998.5 492.4 999.7 494.4 C1001.0 496.4 1000.9 497.9 1000.8 499.7 C1000.7 501.5 1000.5 504.0 999.0 505.4 C997.5 506.8 990.6 506.9 991.5 508.0 C992.4 509.1 1001.7 510.3 1004.4 511.8 C1007.1 513.3 1008.3 515.6 1007.6 517.2 C1006.9 518.8 1001.0 520.2 1000.1 521.5 C999.2 522.8 999.6 523.5 1002.3 524.7 C1005.0 526.0 1013.9 527.6 1016.2 529.0 C1018.5 530.4 1019.2 531.5 1016.2 533.3 C1013.2 535.1 999.4 537.7 998.0 539.7 C996.6 541.7 1006.2 543.5 1007.6 545.1 C1009.0 546.7 1007.4 548.3 1006.5 549.4 C1005.6 550.5 1001.8 550.4 1002.3 551.5 C1002.8 552.6 1009.8 556.0 1009.8 556.0 C1009.8 556.0 1010.0 578.0 1010.0 578.0 C1010.0 578.0 942.0 578.0 942.0 578.0 C942.0 578.0 942.9 577.4 942.2 576.2 C941.5 575.0 937.9 572.8 937.9 570.8 C937.9 568.8 942.6 566.7 942.2 564.4 C941.8 562.1 936.6 559.0 935.7 556.9 C934.8 554.8 933.8 552.8 936.8 551.5 C939.8 550.2 952.2 550.8 954.0 549.4 C955.8 548.0 947.9 544.9 947.5 542.9 C947.1 540.9 949.8 539.8 951.8 537.6 C953.8 535.5 958.6 531.8 959.3 530.0 C960.0 528.2 958.4 527.7 956.1 526.8 C953.8 525.9 947.4 525.8 945.4 524.7 C943.4 523.6 941.6 521.8 944.3 520.4 C947.0 519.0 959.4 517.5 961.5 516.1 C963.6 514.7 957.9 513.2 957.2 511.8 C956.5 510.4 956.7 508.8 957.2 507.5 C957.7 506.2 960.2 505.6 960.4 504.3 C960.6 503.1 957.1 501.3 958.3 500.0 C959.5 498.7 967.7 497.4 967.6 496.5 C967.5 495.6 959.8 495.3 957.9 494.4 C956.0 493.5 955.4 492.2 956.3 491.2 C957.2 490.2 960.7 489.4 963.3 488.5 C965.9 487.6 970.9 486.8 971.8 485.8 C972.7 484.8 968.4 483.9 968.6 482.6 C968.8 481.4 973.2 479.6 972.9 478.3 C972.5 477.1 967.9 476.1 966.5 475.1 C965.1 474.1 963.9 473.5 964.3 472.4 C964.6 471.3 967.7 469.8 968.6 468.6 C969.5 467.4 969.9 466.5 969.7 465.4 C969.5 464.3 967.1 463.3 967.6 462.2 C968.1 461.1 972.0 460.1 972.9 459.0 C973.8 457.9 973.1 457.1 972.9 455.8 C972.7 454.6 971.6 453.1 971.8 451.5 C972.0 449.9 973.1 447.4 974.0 446.1 C974.9 444.8 976.7 445.0 977.2 443.9 C977.7 442.8 976.8 441.2 977.2 439.7 C977.7 438.2 979.0 435.2 979.9 434.8Z" fill="#10764b" stroke="#0f5f37" stroke-width="1"/>
<path d="M914.0 625.0 C914.0 625.0 913.0 595.8 914.0 588.0 C915.0 580.2 915.7 579.9 920.0 578.0 C924.3 576.1 927.9 576.8 940.0 576.5 C952.1 576.2 992.7 576.0 992.7 576.0 C992.7 576.0 994.6 567.1 994.6 567.1 C994.6 567.1 1008.0 565.2 1008.0 565.2 C1008.0 565.2 1008.6 557.7 1009.9 554.7 C1011.2 551.7 1012.4 548.6 1015.6 547.0 C1018.8 545.4 1029.0 545.1 1029.0 545.1 C1029.0 545.1 1031.2 538.3 1034.7 535.6 C1038.2 532.9 1045.7 529.7 1049.9 528.9 C1054.1 528.1 1057.1 528.7 1060.0 530.8 C1062.9 532.9 1066.0 537.6 1067.2 541.5 C1068.4 545.4 1067.2 554.1 1067.2 554.1 C1067.2 554.1 1080.2 555.6 1086.8 555.9 C1093.3 556.2 1100.8 554.7 1106.5 555.9 C1112.2 557.1 1117.8 560.9 1120.8 563.0 C1123.8 565.1 1124.4 568.4 1124.4 568.4 C1124.4 568.4 1127.9 563.6 1131.5 563.0 C1135.1 562.4 1141.6 565.4 1145.8 564.8 C1150.0 564.2 1156.5 559.4 1156.5 559.4 C1156.5 559.4 1160.4 549.9 1163.7 546.9 C1167.0 543.9 1171.7 542.7 1176.2 541.5 C1180.7 540.3 1177.9 540.0 1190.5 539.8 C1203.1 539.5 1252.0 540.0 1252.0 540.0 C1252.0 540.0 1252.0 625.0 1252.0 625.0 C1252.0 625.0 914.0 625.0 914.0 625.0Z" fill="#1a9640"/>
<path d="M914 590 L1252 590 L1252 634 L924 634 Q914 634 914 624Z" fill="#1a9640"/>
<path d="M1225.5 449.5 C1227.3 449.1 1230.0 451.1 1231.4 454.3 C1232.8 457.5 1232.8 465.0 1233.8 468.6 C1234.8 472.2 1237.4 475.7 1237.4 475.7 C1237.4 475.7 1234.2 478.4 1233.8 480.0 C1233.4 481.6 1234.2 483.9 1235.0 485.2 C1235.8 486.5 1238.6 487.6 1238.6 487.6 C1238.6 487.6 1235.4 493.9 1236.2 497.1 C1237.0 500.3 1243.3 506.7 1243.3 506.7 C1243.3 506.7 1241.0 508.8 1241.0 510.0 C1241.0 511.2 1242.1 512.4 1243.3 513.8 C1244.5 515.2 1246.6 517.6 1248.1 518.6 C1249.5 519.6 1252.0 520.0 1252.0 520.0 C1252.0 520.0 1252.0 566.0 1252.0 566.0 C1252.0 566.0 1229.0 568.6 1229.0 568.6 C1229.0 568.6 1228.9 575.5 1227.9 576.9 C1226.9 578.3 1224.1 578.3 1223.1 576.9 C1222.1 575.5 1221.9 568.6 1221.9 568.6 C1221.9 568.6 1197.0 566.6 1191.0 565.0 C1185.0 563.4 1186.2 559.0 1186.2 559.0 C1186.2 559.0 1194.7 552.0 1195.7 549.5 C1196.7 547.0 1192.8 545.6 1192.0 544.0 C1191.2 542.4 1191.0 540.0 1191.0 540.0 C1191.0 540.0 1201.5 538.0 1202.9 536.4 C1204.3 534.8 1199.3 530.5 1199.3 530.5 C1199.3 530.5 1207.6 524.9 1207.6 523.3 C1207.6 521.7 1200.9 522.2 1199.3 521.0 C1197.7 519.8 1198.1 516.2 1198.1 516.2 C1198.1 516.2 1212.0 514.0 1213.6 512.6 C1215.2 511.2 1207.6 507.9 1207.6 507.9 C1207.6 507.9 1211.2 502.1 1211.2 499.5 C1211.2 496.9 1207.6 492.4 1207.6 492.4 C1207.6 492.4 1217.3 487.6 1218.3 485.2 C1219.3 482.8 1213.6 478.1 1213.6 478.1 C1213.6 478.1 1215.9 472.2 1217.1 468.6 C1218.3 465.0 1219.3 459.9 1220.7 456.7 C1222.1 453.5 1223.7 449.9 1225.5 449.5Z" fill="#10764b" stroke="#126a40" stroke-width="0.8"/>
<path d="M1083.5 520.5 C1084.6 518.2 1086.4 515.8 1090.0 514.5 C1093.6 513.2 1100.2 512.9 1105.0 512.5 C1109.8 512.1 1113.7 512.4 1119.0 512.0 C1124.3 511.6 1132.1 511.5 1136.9 510.3 C1141.7 509.1 1145.5 505.6 1148.0 505.0 C1150.5 504.4 1151.7 506.7 1151.7 506.7 C1151.7 506.7 1150.0 500.0 1150.0 500.0 C1150.0 500.0 1143.3 492.0 1143.3 492.0 C1143.3 492.0 1148.3 494.1 1152.5 494.5 C1156.7 494.9 1164.1 494.9 1168.4 494.5 C1172.7 494.1 1178.4 492.0 1178.4 492.0 C1178.4 492.0 1171.7 500.0 1171.7 500.0 C1171.7 500.0 1170.0 505.1 1170.0 508.4 C1170.0 511.7 1171.2 517.4 1171.7 520.0 C1172.2 522.6 1173.6 521.2 1173.0 524.0 C1172.4 526.8 1170.2 533.5 1168.0 537.0 C1165.8 540.5 1162.4 542.7 1160.1 545.1 C1157.8 547.5 1154.0 551.5 1154.0 551.5 C1154.0 551.5 1157.2 578.8 1156.5 584.5 C1155.8 590.2 1150.0 585.6 1150.0 585.6 C1150.0 585.6 1147.6 555.9 1147.6 555.9 C1147.6 555.9 1144.0 552.3 1144.0 552.3 C1144.0 552.3 1144.3 579.0 1143.1 584.5 C1141.9 590.0 1137.0 585.0 1137.0 585.0 C1137.0 585.0 1135.1 552.3 1135.1 552.3 C1135.1 552.3 1119.0 551.4 1113.6 550.5 C1108.2 549.6 1102.9 546.9 1102.9 546.9 C1102.9 546.9 1097.5 553.1 1097.5 559.4 C1097.5 565.7 1103.0 580.0 1102.9 584.5 C1102.8 589.0 1096.7 586.2 1096.7 586.2 C1096.7 586.2 1092.2 561.2 1092.2 561.2 C1092.2 561.2 1089.0 564.5 1088.6 568.4 C1088.1 572.3 1090.2 581.7 1089.5 584.5 C1088.8 587.3 1084.1 585.4 1084.1 585.4 C1084.1 585.4 1084.7 559.6 1085.9 552.3 C1087.1 545.0 1091.1 545.1 1091.2 541.5 C1091.3 537.9 1088.1 533.0 1086.8 530.8 C1085.5 528.5 1083.5 528.0 1083.5 528.0 C1083.5 528.0 1082.4 522.8 1083.5 520.5Z" fill="#8e5318" stroke="#7a4512" stroke-width="0.8"/>
<g fill="none" stroke="#8e5318" stroke-linecap="round" stroke-linejoin="round"><path d="M1153 490 C1145 484 1138 479 1137 471 C1136.5 465 1140 460 1145 457.9" stroke-width="3.6"/><path d="M1137.5 465 L1148.4 460.8M1139 473 L1151.7 467.9M1155.9 492 L1155.4 475M1168.4 490 L1165.9 476" stroke-width="3"/><path d="M1171.7 490 C1178 485 1185 480 1186.7 473.4 C1188 467 1185 460 1180 455.4" stroke-width="3.6"/><path d="M1185.5 463 L1175 457.9M1186.5 472 L1171.7 469.2" stroke-width="3"/></g>
<path d="M943 606.5V634M1078.8 606.5V634M1215 606.5V634" stroke="#e4efe7" stroke-width="1.3"/>
<rect x="432" y="827" width="443" height="2" fill="#1a7f47"/>
<path d="M541.9 828.0 C541.9 828.0 540.8 824.3 541.9 821.5 C543.0 818.7 548.7 811.3 548.7 811.3 C548.7 811.3 541.9 812.5 541.9 812.5 C541.9 812.5 549.4 809.0 553.2 808.0 C557.0 807.0 559.9 808.1 564.6 806.8 C569.3 805.5 577.4 800.7 581.6 800.0 C585.8 799.3 590.0 802.7 590.0 802.7 C590.0 802.7 594.5 799.5 596.8 798.1 C599.1 796.7 603.6 794.2 603.6 794.2 C603.6 794.2 604.2 797.6 605.9 799.3 C607.6 801.0 613.8 804.4 613.8 804.4 C613.8 804.4 619.6 801.0 624.0 800.4 C628.4 799.8 639.9 801.0 639.9 801.0 C639.9 801.0 632.0 807.2 632.0 807.2 C632.0 807.2 653.5 811.2 653.5 811.2 C653.5 811.2 651.2 806.1 651.2 806.1 C651.2 806.1 659.7 803.6 663.7 803.8 C667.7 804.0 675.0 807.2 675.0 807.2 C675.0 807.2 678.4 797.0 678.4 797.0 C678.4 797.0 696.6 807.8 696.6 807.8 C696.6 807.8 706.8 799.8 706.8 799.8 C706.8 799.8 713.6 806.6 713.6 806.6 C713.6 806.6 725.5 800.1 729.5 800.4 C733.5 800.7 733.8 805.5 737.4 808.3 C741.0 811.1 751.0 817.4 751.0 817.4 C751.0 817.4 744.2 819.7 744.2 819.7 C744.2 819.7 750.5 822.8 752.1 824.2 C753.7 825.6 754.0 828.0 754.0 828.0 C754.0 828.0 541.9 828.0 541.9 828.0Z" fill="#10764b"/>
<path d="M462.6 751.3 C462.6 751.3 466.1 757.8 468.3 759.3 C470.5 760.8 472.6 760.3 476.0 760.0 C479.4 759.7 488.7 757.6 488.7 757.6 C488.7 757.6 485.1 763.9 484.2 767.2 C483.2 770.5 482.8 774.9 483.0 777.4 C483.2 779.9 485.3 782.5 485.3 782.5 C485.3 782.5 497.6 782.5 502.3 782.5 C507.0 782.5 510.0 782.0 513.6 782.5 C517.2 783.0 523.8 785.3 523.8 785.3 C523.8 785.3 525.7 782.3 530.6 781.9 C535.5 781.5 546.6 781.9 553.2 783.0 C559.8 784.1 565.1 788.4 570.2 788.7 C575.3 789.0 583.8 784.7 583.8 784.7 C583.8 784.7 585.1 790.1 583.8 793.2 C582.5 796.3 580.0 801.1 575.9 803.4 C571.8 805.7 564.6 806.6 558.9 806.8 C553.2 807.0 546.6 805.7 541.9 804.6 C537.2 803.5 530.6 800.0 530.6 800.0 C530.6 800.0 528.0 804.8 529.5 808.0 C531.0 811.2 537.6 816.1 539.7 819.3 C541.8 822.5 541.9 827.2 541.9 827.2 C541.9 827.2 536.3 827.2 536.3 827.2 C536.3 827.2 536.1 822.5 532.9 820.4 C529.7 818.3 517.0 814.7 517.0 814.7 C517.0 814.7 518.3 818.3 518.1 820.4 C517.9 822.5 515.9 827.2 515.9 827.2 C515.9 827.2 510.8 827.2 510.8 827.2 C510.8 827.2 513.5 821.8 512.5 819.3 C511.5 816.8 504.6 812.5 504.6 812.5 C504.6 812.5 492.1 811.3 492.1 811.3 C492.1 811.3 491.4 814.4 491.0 817.0 C490.6 819.6 489.8 827.2 489.8 827.2 C489.8 827.2 485.3 827.2 485.3 827.2 C485.3 827.2 485.3 819.6 484.2 817.0 C483.1 814.4 478.5 811.3 478.5 811.3 C478.5 811.3 475.1 816.6 474.0 819.3 C472.9 821.9 471.7 827.2 471.7 827.2 C471.7 827.2 466.6 827.2 466.6 827.2 C466.6 827.2 469.3 817.9 469.4 814.7 C469.5 811.5 468.9 810.6 467.2 808.0 C465.5 805.4 460.9 802.7 459.3 798.9 C457.7 795.1 457.5 789.8 457.6 785.3 C457.7 780.8 459.2 776.2 459.8 771.7 C460.4 767.2 460.5 761.5 461.0 758.1 C461.5 754.7 462.6 751.3 462.6 751.3Z" fill="#8b3717" stroke="#7a2e10" stroke-width="0.8"/>
<path d="M700.0 828.0 C700.0 828.0 699.1 805.2 700.0 800.4 C700.9 795.6 705.4 799.2 705.4 799.2 C705.4 799.2 712.0 806.4 712.0 806.4 C712.0 806.4 720.0 802.2 724.0 801.6 C728.0 801.0 732.5 800.6 736.0 802.8 C739.5 805.0 742.7 810.8 745.0 815.0 C747.3 819.2 750.0 828.0 750.0 828.0 C750.0 828.0 700.0 828.0 700.0 828.0Z" fill="#10764b"/>
<path d="M726.4 761.4 C726.4 761.4 731.8 766.8 731.8 766.8 C731.8 766.8 735.4 762.6 735.4 762.6 C735.4 762.6 737.1 768.5 739.6 771.6 C742.1 774.7 745.0 779.3 750.4 781.2 C755.8 783.1 764.4 783.1 772.0 783.0 C779.6 782.9 789.0 780.3 796.0 780.6 C803.0 780.9 808.0 782.9 814.0 784.8 C820.0 786.7 825.0 791.3 832.0 792.0 C839.0 792.7 850.7 789.0 856.1 789.0 C861.5 789.0 863.1 789.7 864.5 792.0 C865.9 794.3 866.3 799.8 864.5 802.8 C862.7 805.8 859.1 808.6 853.7 810.0 C848.3 811.4 837.8 811.0 832.0 811.2 C826.2 811.4 818.8 811.2 818.8 811.2 C818.8 811.2 819.7 821.7 820.0 824.4 C820.3 827.1 820.6 827.4 820.6 827.4 C820.6 827.4 810.4 827.4 810.4 827.4 C810.4 827.4 813.6 826.7 811.6 824.4 C809.6 822.1 803.0 815.8 798.4 813.6 C793.8 811.4 789.2 811.2 784.0 811.2 C778.8 811.2 767.2 813.6 767.2 813.6 C767.2 813.6 766.0 827.4 766.0 827.4 C766.0 827.4 752.8 827.4 752.8 827.4 C752.8 827.4 754.4 817.7 751.6 813.6 C748.8 809.5 739.6 806.4 736.0 802.8 C732.4 799.2 733.2 793.9 730.0 792.0 C726.8 790.1 719.9 792.1 716.8 791.4 C713.7 790.7 711.6 788.9 711.4 787.8 C711.2 786.7 713.3 786.9 715.6 784.8 C717.9 782.7 723.4 779.1 725.2 775.2 C727.0 771.3 726.4 761.4 726.4 761.4Z" fill="#8b3717" stroke="#7a2e10" stroke-width="0.8"/>
<rect x="412.2" y="152.2" width="466.2" height="287.2" fill="none" stroke="#8a8a8a" stroke-width="1.1"/>
<rect x="407.9" y="147.9" width="8.6" height="8.6" fill="#fff" stroke="#8a8a8a" stroke-width="1"/>
<rect x="874.1" y="147.9" width="8.6" height="8.6" fill="#fff" stroke="#8a8a8a" stroke-width="1"/>
<rect x="407.9" y="435.1" width="8.6" height="8.6" fill="#fff" stroke="#8a8a8a" stroke-width="1"/>
<rect x="874.1" y="435.1" width="8.6" height="8.6" fill="#fff" stroke="#8a8a8a" stroke-width="1"/>
<path d="M630 296H660M645 281V311" stroke="#7cc08f" stroke-width="0.8" opacity="0.6"/>
<rect x="601" y="445.3" width="89.4" height="16.1" rx="2" fill="#1a1a1a"/>
<text x="610.5" y="457.4" font-size="10" fill="#fff" font-family="Liberation Sans" xml:space="preserve" textLength="70.8">4.72  in x 2.91  in</text>
</g></svg>
<div id="vs" class="a"></div>
<div class="a" style="left:1251px;top:140px;width:12px;height:19.5px;background:#c2c2c2"></div>
<div class="a" style="left:1254px;top:125px;width:0;height:0;border-left:3.5px solid transparent;border-right:3.5px solid transparent;border-bottom:4px solid #222"></div>
<div class="a" style="left:1254px;top:819.5px;width:0;height:0;border-left:3.5px solid transparent;border-right:3.5px solid transparent;border-top:4px solid #222"></div>
<div id="hs" class="a"></div><div class="a" style="left:1249px;top:829px;width:16px;height:10px;background:#e4e4e4"></div>
<div class="a" style="left:103px;top:829px;width:56px;height:10px;background:#c4c4c4"></div>
<div class="a" style="left:58px;top:831.5px;width:0;height:0;border-top:3.5px solid transparent;border-bottom:3.5px solid transparent;border-right:4px solid #222"></div>
<div class="a" style="left:1242px;top:831.5px;width:0;height:0;border-top:3.5px solid transparent;border-bottom:3.5px solid transparent;border-left:4px solid #222"></div>
<div id="rp" class="a"></div><div class="a" style="left:1265px;top:81px;width:235px;height:2px;background:#e9e9e9"></div>
<div class="a" style="left:1265px;top:118px;width:235px;height:1px;background:#ebebeb"></div>
<div class="t" style="left:1280px;top:95px;font-size:11.2px;color:#1f7a58;-webkit-text-stroke:0.6px #1f7a58">Layers</div>
<div class="t" style="left:1338px;top:95px;font-size:11.5px;color:#666">Color Sync</div>
<div class="a" style="left:1267px;top:116px;width:60px;height:2.5px;background:#177a55;border-radius:1px"></div>
<svg class="a" style="left:1265px;top:120px" width="235" height="40" fill="none" stroke-linecap="round" stroke-linejoin="round">
<g stroke="#d8d8d8" stroke-width="1.2"><path d="M17 11H16V14M28 11H29V14M17 24H16V21M28 24H29V21"/><circle cx="22.5" cy="17.5" r="3.5"/></g>
<g stroke="#444" stroke-width="1.3"><rect x="48.5" y="10.5" width="10" height="10" rx="1"/><rect x="52.5" y="14.5" width="10" height="10" rx="1" fill="#fff"/><path d="M57.5 17V22M55 19.5H60"/></g>
<g stroke="#444" stroke-width="1.3"><path d="M79.5 13H93.5M83.5 13V11H89.5V13M81.5 13L82.5 24.5H90.5L91.5 13M84.5 16V21.5M88.5 16V21.5"/></g>
</svg>
<div class="a" style="left:1266px;top:156px;width:234px;height:1px;background:#efefef"></div>
<div class="a" style="left:1489px;top:157px;width:11px;height:609px;background:#f0f0f0"></div>
<div class="a" style="left:1489px;top:171px;width:11px;height:224px;background:#c9c9c9"></div>
<div class="a" style="left:1491.5px;top:162px;width:0;height:0;border-left:3px solid transparent;border-right:3px solid transparent;border-bottom:3.5px solid #222"></div>
<div class="a" style="left:1491.5px;top:757.5px;width:0;height:0;border-left:3px solid transparent;border-right:3px solid transparent;border-top:3.5px solid #222"></div>
<div class="a" style="left:1270px;top:160px;width:215px;height:42px;background:#b9ebda;border-radius:3px"></div>
<svg class="a" style="left:1265px;top:157px" width="224" height="609">
<path d="M30.8 27 Q31.5 23 35.5 22 L37 18.3 L38.8 21.3 L40.5 17.8 L42.3 21.5 L44 19.8 L45.3 22.3 Q48.5 23.5 48.6 27 L46 26.6 L46.5 28 L44 26.8Z" fill="#1b9a3f" stroke="#0b3d1a" stroke-width="0.9" stroke-linejoin="round"/>
<path d="M31 68.5 L32.5 65.8 L35.5 65.2 Q40 62.6 44 63.4 Q47.6 64.5 47.3 68.5 L47 74.5 H45 L44.6 71 L41.3 71.3 L40.8 74.5 H38.8 L38.4 71.5 H36.3 L35.8 74.5 H33.8 L33.8 70.5 L31.2 70Z" fill="#c6c6c6"/>
<path d="M31 114 L32.5 111.3 L35.5 110.7 Q40 108.1 44 108.9 Q47.6 110 47.3 114 L47 120 H45 L44.6 116.5 L41.3 116.8 L40.8 120 H38.8 L38.4 117 H36.3 L35.8 120 H33.8 L33.8 116 L31.2 115.5Z" fill="#c6c6c6"/>
<path d="M30.5 164.2 Q35 162.8 39 164.2 Q43.5 162.8 48.5 164.2 V165.3 H30.5Z" fill="#d5d5d5"/>
<path d="M31 202.5 L31.5 199.3 L33 201 L34.5 199.5 L35 202.5 L38 203.5 L43 203.5 Q46 203 47.8 204.2 L45.5 206 L43.5 205.8 L42.2 210.8 H40.8 L41 206.5 L38 206.5 L36 210.8 H34.6 L35.5 206.5 L34 206 L33 210.8 H31.8 L32.3 205.5Z" fill="#8f3a15" stroke="#4a1a08" stroke-width="0.5" stroke-linejoin="round"/>
<path d="M31 249 L32.5 245.8 L33.5 247 L36 248.5 L42 248.5 Q45.5 248 47.8 249.5 L45.5 251.5 L43 251 L42 255 H40.6 L40.5 252 L36.5 252 L35.5 255 H34 L34.3 251.5 L31.5 250.5Z" fill="#8f3a15" stroke="#4a1a08" stroke-width="0.5" stroke-linejoin="round"/>
<path d="M55.5 344.5 L58 342 L62 340.5 L66.5 340 L69.5 338 L70 334 L71.5 336.5 L72 333.5 L72.8 337.5 L71.5 340.5 L72.8 343.5 L71 343 L68 342.5 L63 343.5 L58.5 344.5 L56.5 345.5Z" fill="#2f3a38" stroke="#1a2220" stroke-width="0.6" stroke-linejoin="round"/>
<path d="M55.5 386.5 L58.5 385 L62 384 L65 382 L68 381.5 L67.5 379.5 L69.5 381 L71 383 L73 386.5 L71 387.5 L68.5 386 L65 386.5 L61 386.5 L57 387.5Z" fill="#a35d22" stroke="#3a2410" stroke-width="0.6" stroke-linejoin="round"/>
<path d="M55.5 432 L57.5 429.5 L59 428 L62 427 L66 426.5 L69 424.5 L68 421.5 L70.5 423 L72 425.5 L72.5 428.5 L70 429.5 L66.5 430 L62 431 L58 433.5Z" fill="#4f2c12" stroke="#231308" stroke-width="0.6" stroke-linejoin="round"/>
<path d="M55.5 470 H73" stroke="#1b9a3f" stroke-width="2.6"/><path d="M55.5 470 H60" stroke="#0f5e27" stroke-width="2.8"/>
<path d="M80 521 Q80.5 516.5 84 516 L85.5 512 L87.5 514.5 L89.5 510.5 L91.5 514 L94.5 512.5 L94.5 516.5 Q98.5 517.5 98.5 521Z" fill="#1b9a3f" stroke="#11702c" stroke-width="0.6"/>
<path d="M80 560.5 Q89 557.5 99 560.5 V561.5 H80Z" fill="#0f6a2d"/>
<path d="M80 602 H99" stroke="#167a3a" stroke-width="2.6"/><path d="M80 602 H84" stroke="#0f5e27" stroke-width="2.8"/>
<g fill="none" stroke="#444" stroke-width="1.2" stroke-linecap="round" stroke-linejoin="round">
<path d="M13.5 293.5L17 297L20.5 293.5"/>
<path d="M34 289H33V291.5M44 289H45V291.5M34 302H33V299.5M44 302H45V299.5"/><rect x="36" y="292" width="5.5" height="5.5" rx="1"/><rect x="38.5" y="294.5" width="5" height="5" rx="1"/>
<path d="M38.5 469L42 472.5L45.5 469"/>
</g>
<g fill="none" stroke="#aaa" stroke-width="1.1" stroke-linecap="round">
<path d="M177.5 69.5Q183 64 188.5 69.5Q183 75 177.5 69.5Z M177.5 65L188 74.5"/>
<path d="M177.5 114.5Q183 109 188.5 114.5Q183 120 177.5 114.5Z M177.5 110L188 119.5"/>
<path d="M177.5 160.5Q183 155 188.5 160.5Q183 166 177.5 160.5Z M177.5 156L188 165.5"/>
</g>
</svg>
<div class="lay" style="left:1320px;top:168px;color:#2a2a2a;-webkit-text-stroke:0.45px #2a2a2a;letter-spacing:0.1px">Weld Result</div>
<div class="lay2" style="left:1320px;top:183.5px;color:#777">Basic Cut</div>
<div class="lay" style="left:1320.5px;top:213.5px;color:#b8b8b8">Bear</div>
<div class="lay2" style="left:1320.5px;top:229px;color:#d0d0d0">Basic Cut</div>
<div class="lay" style="left:1320.5px;top:259px;color:#b8b8b8">Bear</div>
<div class="lay2" style="left:1320.5px;top:274.5px;color:#d0d0d0">Basic Cut</div>
<div class="lay" style="left:1320.5px;top:304px;color:#b8b8b8">Bush</div>
<div class="lay2" style="left:1320.5px;top:319.5px;color:#d0d0d0">Basic Cut</div>
<div class="lay" style="left:1320.5px;top:350px;color:#444">Fox</div>
<div class="lay2" style="left:1320.5px;top:365px">Basic Cut</div>
<div class="lay" style="left:1320.5px;top:395px;color:#444">Fox</div>
<div class="lay2" style="left:1320.5px;top:410.5px">Basic Cut</div>
<div class="lay" style="left:1320.5px;top:447.5px;color:#555">Group</div>
<div class="lay" style="left:1345px;top:484px;color:#444">Rabbit</div>
<div class="lay2" style="left:1345px;top:500px">Basic Cut</div>
<div class="lay" style="left:1345px;top:528.5px;color:#444;letter-spacing:0.25px">Hopping Rabbit</div>
<div class="lay2" style="left:1345px;top:544.5px">Basic Cut</div>
<div class="lay" style="left:1345px;top:572.5px;color:#444;letter-spacing:0.25px">Easter Bunny</div>
<div class="lay2" style="left:1345px;top:588.5px">Basic Cut</div>
<div class="lay" style="left:1345px;top:616.5px;color:#444">Unite</div>
<div class="lay2" style="left:1345px;top:632px">Basic Cut</div>
<div class="lay" style="left:1370.5px;top:667px;color:#444">Shrub</div>
<div class="lay" style="left:1370.5px;top:711px;color:#444">Bush</div>
<div class="a" style="left:1265px;top:753px;width:224px;height:13px;overflow:hidden"><div class="lay" style="left:105.5px;top:3px;color:#444;letter-spacing:0.2px">svg-popout-te...</div></div>
<div class="a" style="left:1266px;top:766px;width:234px;height:38.5px;background:#f2f2f2"></div>
<div class="a" style="left:1274.5px;top:770.5px;width:42px;height:29px;background:#fff;border:1px solid #9a9a9a;border-radius:2px"></div>
<div class="t" style="left:1324px;top:781.5px;font-size:7.9px;color:#444">Blank Canvas</div>
<svg class="a" style="left:1265px;top:804px" width="235" height="35" fill="none" stroke-linecap="round" stroke-linejoin="round">
<g stroke="#cfcfcf" stroke-width="1.2"><path d="M18 10H16.5V15M25 19.5H30.5V7.5"/><rect x="19" y="9.5" width="9" height="9" rx="4.5"/><path d="M17.5 13Q16 5 24 5.5"/></g>
<g stroke="#cfcfcf" stroke-width="1.2"><rect x="51" y="5.5" width="9" height="9" rx="1"/><circle cx="60" cy="14.5" r="5"/></g>
<path d="M69 11.5H73L71 13.5Z" fill="#cfcfcf"/>
<g stroke="#d0d0d0" stroke-width="1.2"><path d="M100 14H107A3 3 0 0 0 107 8H97A3.5 3.5 0 0 0 97 15H106A1.5 1.5 0 0 0 106 12H98"/></g>
<g stroke="#d0d0d0" stroke-width="1.2"><path d="M140 4V10M137.5 8L140 10.5L142.5 8M133.5 11L140 15L146.5 11M133.5 14L140 18L146.5 14"/></g>
<circle cx="180.5" cy="11.5" r="7.5" stroke="#333" stroke-width="1.5" stroke-dasharray="2.6 2.1"/>
</svg>
<div class="t" style="left:1279.5px;top:827.5px;font-size:8.3px;color:#cdcdcd">Slice</div>
<div class="t" style="left:1310px;top:827.5px;font-size:8.3px;color:#cdcdcd">Combine</div>
<div class="t" style="left:1356.5px;top:827.5px;font-size:8.3px;color:#cdcdcd">Attach</div>
<div class="t" style="left:1393px;top:827.5px;font-size:8.3px;color:#cdcdcd">Flatten</div>
<div class="t" style="left:1430.5px;top:827.5px;font-size:8.3px;color:#333">Contour</div>

<div class="a" style="left:118.5px;top:795.5px;width:49px;height:25.5px;border-radius:8px;background:rgba(255,255,255,0.13)"></div>
<div class="t" style="left:130.5px;top:803px;font-size:13px;color:#6a90b0">%</div>
<svg class="a" style="left:147px;top:800px" width="18" height="18"><circle cx="9" cy="8.7" r="7" fill="none" stroke="#6a90b0" stroke-width="1.2"/><path d="M9 4.7V12.7M5 8.7H13" stroke="#6a90b0" stroke-width="1.2"/></svg>
<svg class="a" style="left:0;top:700px" width="200" height="139">
<ellipse cx="80" cy="75.3" rx="66.3" ry="51.8" fill="#f2d5cc" opacity="0.6"/>
<ellipse cx="80" cy="75.3" rx="65.5" ry="51" fill="#c5361b"/>
<text x="33" y="75" font-family="Liberation Serif" font-style="italic" font-size="33" fill="#fff" textLength="68" lengthAdjust="spacingAndGlyphs">Craft</text>
<text x="107" y="66.5" font-family="Liberation Serif" font-weight="bold" font-size="8.5" fill="#fff" textLength="26.5" lengthAdjust="spacingAndGlyphs">WITH</text>
<path d="M106 72Q114 67 122 70Q130 73 134 67.5" stroke="#fff" stroke-width="1.8" fill="none" stroke-linecap="round"/>
<g fill="none" stroke="#fff" stroke-width="1.3" stroke-linecap="round">
<path d="M47 47C40 43 30 43 29.5 48C29 53 36 55 41 51"/>
<path d="M62 88C74 80 100 78 112 83C118 86 122 84 124 80C125 76 120 75 116 78"/>
<path d="M41 108C34 110 30 104 33 99C35 96 39 95 43 97"/>
</g>
<text x="41" y="108" font-family="Liberation Serif" font-style="italic" font-size="33" fill="#fff" textLength="80" lengthAdjust="spacingAndGlyphs">Sarah</text>
</svg>
<svg class="a" style="left:1244px;top:214px" width="20" height="28"><path d="M2.4 2.4L16.7 17H10.5L13.5 24L10 25.3L6.7 18.4L2.2 21.5Z" fill="#000" stroke="#fff" stroke-width="1" stroke-linejoin="round"/></svg>

</body></html>
